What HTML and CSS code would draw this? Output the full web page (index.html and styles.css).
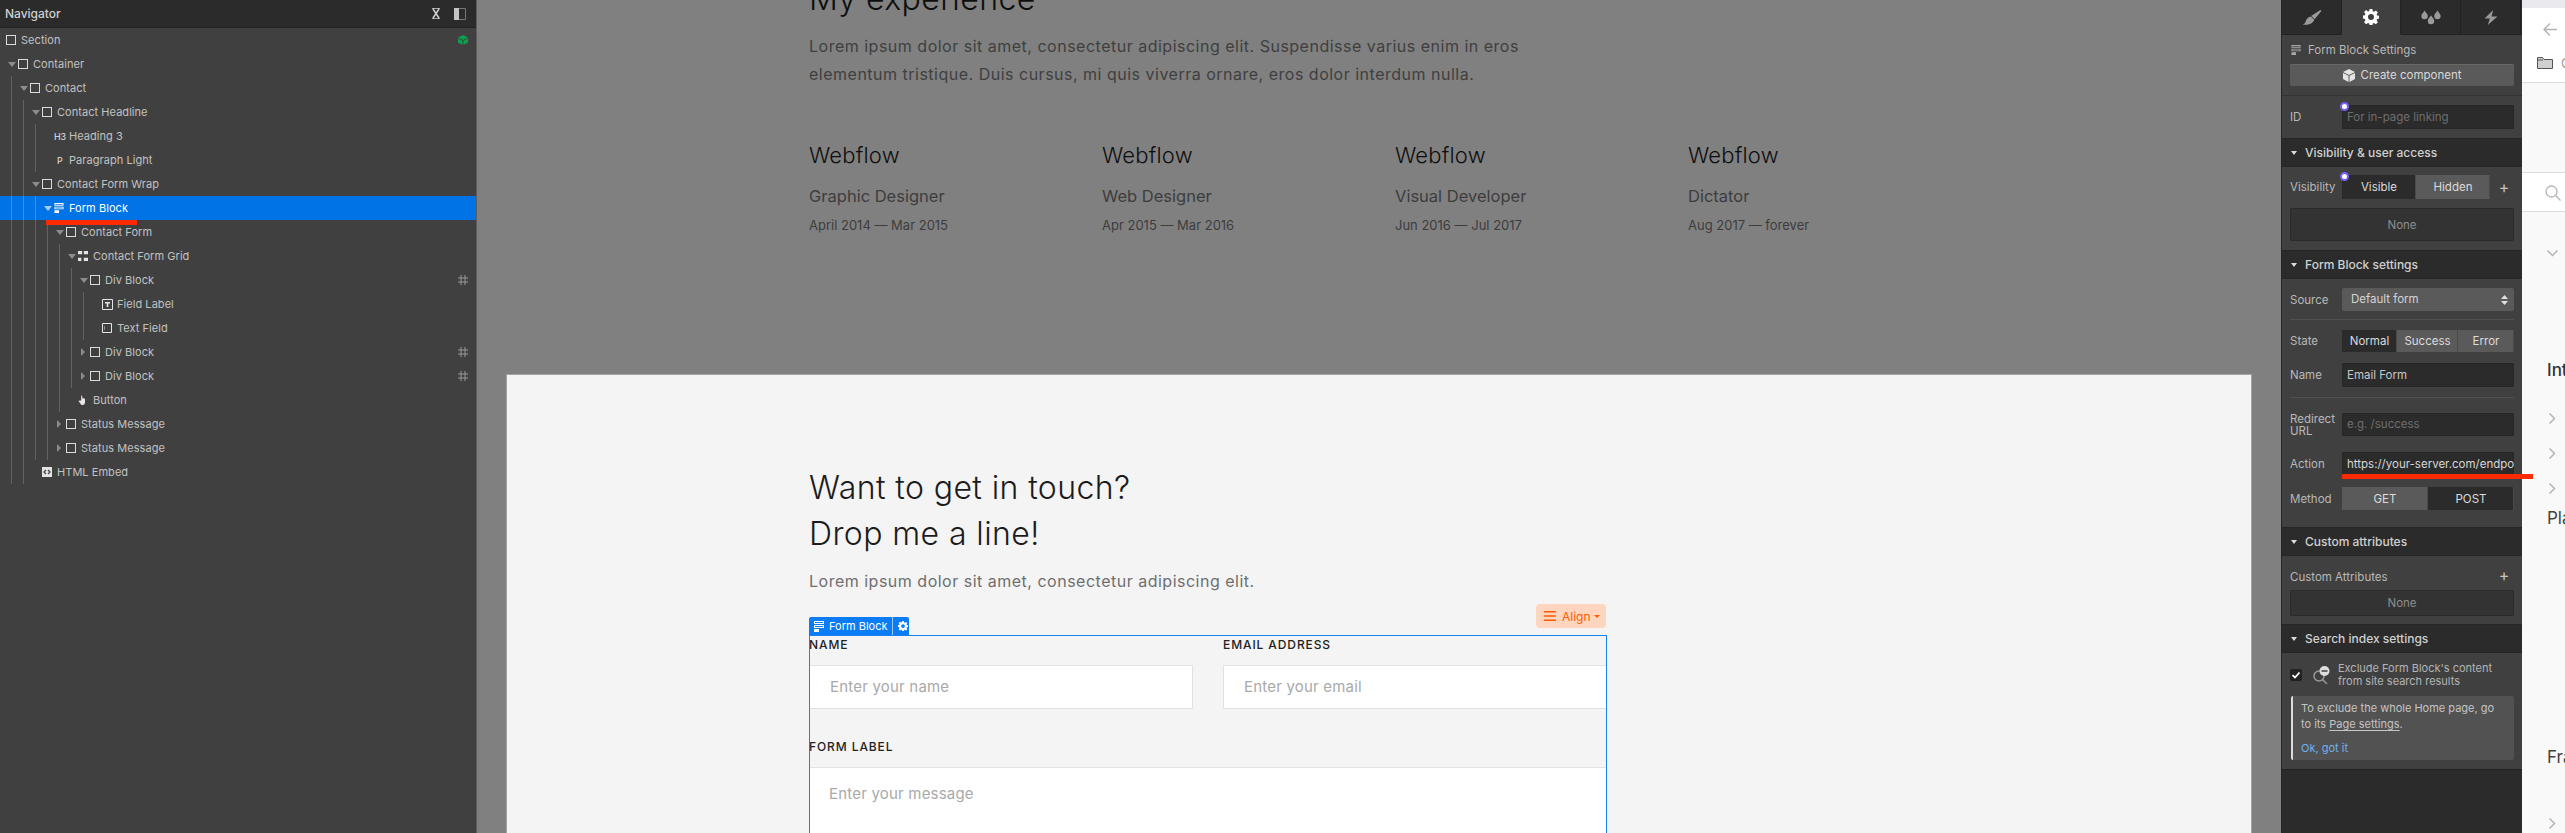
FILE: index.html
```html
<!DOCTYPE html>
<html lang="en">
<head>
    <meta charset="UTF-8">
    <meta name="viewport" content="width=device-width, initial-scale=1.0">
    <title>Form Block</title>
    <link rel="stylesheet" href="styles.css">
</head>
<body>

    <svg class="d-none">
        <symbol id="formIcon" viewBox="0 0 10 11"><path d="M0 0h10v3H0z M1 1v1h8V1z M0 4h10v3H0z M1 5v1h8V5z M0 8h5v3H0z" fill="currentColor" fill-rule="evenodd"/></symbol>
        <symbol id="gridIcon" viewBox="0 0 10 10"><path d="M3 0v10M7 0v10M0 3h10M0 7h10" fill="none" stroke="currentColor"/></symbol>
        <symbol id="gearIcon" viewBox="0 0 16 16"><path d="M6.6 0h2.8l.4 2.2 1.2.5 1.9-1.3 2 2-1.3 1.9.5 1.2 2.2.4v2.8l-2.2.4-.5 1.2 1.3 1.9-2 2-1.9-1.3-1.2.5-.4 2.2H6.6l-.4-2.2-1.2-.5-1.9 1.3-2-2 1.3-1.9-.5-1.2L-.3 9.4V6.6l2.2-.4.5-1.2L1.1 3.1l2-2 1.9 1.3 1.2-.5zM8 5a3 3 0 1 0 0 6 3 3 0 0 0 0-6z" fill="currentColor" fill-rule="evenodd"/></symbol>
        <symbol id="cubeIcon" viewBox="0 0 12 13"><path d="M6 0l6 3-6 3-6-3zM0 4l5.5 2.8V13L0 10zM12 4L6.500 6.800V13L12 10z" fill="currentColor"/></symbol>
    </svg>

    <div class="app">

        <!-- navigator -->
        <aside class="nav_panel">
            <div class="nav_head">
                <span class="nav_title">Navigator</span>
                <svg class="nav_pin" viewBox="0 0 10 11"><path d="M1 0h8M1 11h8M2 1l6 9M8 1l-6 9" fill="none" stroke="#d0d0d0" stroke-width="1.500"/></svg>
                <svg class="nav_dock" viewBox="0 0 12 12"><path d="M0 0h5v12H0z" fill="#c4c4c4"/><path d="M5 .5h6.500v11H5" fill="none" stroke="#777"/></svg>
            </div>
            <div class="tree">
                <div class="row"><span class="slot slot_root"></span><i class="box"></i><span class="name">Section</span>
                    <svg class="row_end cube" viewBox="0 0 10 10"><path d="M5 0l5 2.500L5 5 0 2.500zM0 3.500l4.500 2.300V10L0 7.500zM10 3.500L5.500 5.800V10L10 7.500z" fill="#0aa04e"/></svg>
                </div>
                <div class="row"><span class="slot"><b class="caret"></b></span><i class="box"></i><span class="name">Container</span></div>
                <div class="row"><i class="g"></i><span class="slot"><b class="caret"></b></span><i class="box"></i><span class="name">Contact</span></div>
                <div class="row"><i class="g"></i><i class="g"></i><span class="slot"><b class="caret"></b></span><i class="box"></i><span class="name">Contact Headline</span></div>
                <div class="row"><i class="g"></i><i class="g"></i><i class="g"></i><span class="slot"></span><span class="tag_icon">H3</span><span class="name">Heading 3</span></div>
                <div class="row"><i class="g"></i><i class="g"></i><i class="g"></i><span class="slot"></span><span class="tag_icon tag_p">P</span><span class="name">Paragraph Light</span></div>
                <div class="row"><i class="g"></i><i class="g"></i><span class="slot"><b class="caret"></b></span><i class="box"></i><span class="name">Contact Form Wrap</span></div>
                <div class="row row_sel"><i class="g"></i><i class="g"></i><i class="g"></i><span class="slot"><b class="caret"></b></span><svg class="ico"><use href="#formIcon"/></svg><span class="name">Form Block</span></div>
                <div class="row"><i class="g"></i><i class="g"></i><i class="g"></i><i class="g"></i><span class="slot"><b class="caret"></b></span><i class="box"></i><span class="name">Contact Form</span></div>
                <div class="row"><i class="g"></i><i class="g"></i><i class="g"></i><i class="g"></i><i class="g"></i><span class="slot"><b class="caret"></b></span>
                    <svg class="ico" viewBox="0 0 12 12"><path d="M0 0h5v4H0zM7 0h5v4H7zM0 8h4v4H0zM7 8h5v4H7z" fill="#e4e4e4"/></svg><span class="name">Contact Form Grid</span></div>
                <div class="row"><i class="g"></i><i class="g"></i><i class="g"></i><i class="g"></i><i class="g"></i><i class="g"></i><span class="slot"><b class="caret"></b></span><i class="box"></i><span class="name">Div Block</span>
                    <svg class="row_end hash"><use href="#gridIcon"/></svg></div>
                <div class="row"><i class="g"></i><i class="g"></i><i class="g"></i><i class="g"></i><i class="g"></i><i class="g"></i><i class="g"></i><span class="slot"></span>
                    <svg class="ico ico_wide" viewBox="0 0 11 11"><path d="M.5.500h10v10H.5z" fill="none" stroke="#e4e4e4"/><path d="M3 3h5v1.500H6.300V8H4.700V4.500H3z" fill="#e4e4e4"/></svg><span class="name">Field Label</span></div>
                <div class="row"><i class="g"></i><i class="g"></i><i class="g"></i><i class="g"></i><i class="g"></i><i class="g"></i><i class="g"></i><span class="slot"></span>
                    <svg class="ico ico_wide" viewBox="0 0 11 11"><path d="M.5.500h9v9h-9z" fill="none" stroke="#e4e4e4"/><path d="M2.500 3v4" stroke="#888"/></svg><span class="name">Text Field</span></div>
                <div class="row"><i class="g"></i><i class="g"></i><i class="g"></i><i class="g"></i><i class="g"></i><i class="g"></i><span class="slot"><b class="caret caret_r"></b></span><i class="box"></i><span class="name">Div Block</span>
                    <svg class="row_end hash"><use href="#gridIcon"/></svg></div>
                <div class="row"><i class="g"></i><i class="g"></i><i class="g"></i><i class="g"></i><i class="g"></i><i class="g"></i><span class="slot"><b class="caret caret_r"></b></span><i class="box"></i><span class="name">Div Block</span>
                    <svg class="row_end hash"><use href="#gridIcon"/></svg></div>
                <div class="row"><i class="g"></i><i class="g"></i><i class="g"></i><i class="g"></i><i class="g"></i><span class="slot"></span>
                    <svg class="ico hand" viewBox="0 0 10 11"><path d="M3 6V1.200c0-.8 1.200-.8 1.200 0V4c0-.6 1-.6 1 0 0-.6 1-.6 1 .1 0-.5 1-.5 1 .2v3.200C7.200 9.800 6.300 11 4.600 11 3 11 2.500 10 1.700 8.700L.3 7c-.4-.6.300-1.200.9-.7z" fill="#e8e8e8"/></svg><span class="name">Button</span></div>
                <div class="row"><i class="g"></i><i class="g"></i><i class="g"></i><i class="g"></i><span class="slot"><b class="caret caret_r"></b></span><i class="box"></i><span class="name">Status Message</span></div>
                <div class="row"><i class="g"></i><i class="g"></i><i class="g"></i><i class="g"></i><span class="slot"><b class="caret caret_r"></b></span><i class="box"></i><span class="name">Status Message</span></div>
                <div class="row"><i class="g"></i><i class="g"></i><span class="slot"></span>
                    <svg class="ico" viewBox="0 0 10 10"><path d="M0 0h10v10H0z" fill="#e4e4e4"/><path d="M4 3L2 5l2 2M6 3l2 2-2 2" fill="none" stroke="#404040" stroke-width="1.200"/></svg><span class="name">HTML Embed</span></div>
            </div>
            <div class="mark mark_nav"></div>
        </aside>

        <!-- canvas -->
        <main class="canvas">
            <div class="page">
                <section class="dim_part">
                    <h3 class="big_head">My experience</h3>
                    <p class="lead lead_wide">Lorem ipsum dolor sit amet, consectetur adipiscing elit. Suspendisse varius enim in eros elementum tristique. Duis cursus, mi quis viverra ornare, eros dolor interdum nulla.</p>
                    <div class="jobs">
                        <div><h4 class="job_co">Webflow</h4><p class="job_role">Graphic Designer</p><p class="job_date">April 2014 — Mar 2015</p></div>
                        <div><h4 class="job_co">Webflow</h4><p class="job_role">Web Designer</p><p class="job_date">Apr 2015 — Mar 2016</p></div>
                        <div><h4 class="job_co">Webflow</h4><p class="job_role">Visual Developer</p><p class="job_date">Jun 2016 — Jul 2017</p></div>
                        <div><h4 class="job_co">Webflow</h4><p class="job_role">Dictator</p><p class="job_date">Aug 2017 — forever</p></div>
                    </div>
                </section>
                <section class="contact_part">
                    <h3 class="big_head big_dark">Want to get in touch?<br>Drop me a line!</h3>
                    <p class="lead lead_light">Lorem ipsum dolor sit amet, consectetur adipiscing elit.</p>
                    <div class="form_block">
                        <div class="form_tag">
                            <svg class="form_tag_ico"><use href="#formIcon"/></svg>
                            <span class="form_tag_txt">Form Block</span>
                            <svg class="form_tag_gear"><use href="#gearIcon"/></svg>
                        </div>
                        <div class="align_btn">
                            <svg class="align_ico" viewBox="0 0 12 10"><path d="M0 0h12v1.500H0zM0 4.200h12v1.500H0zM0 8.500h12V10H0z" fill="#ff5a00"/></svg>
                            Align<b class="align_caret"></b>
                        </div>
                        <div class="form_grid">
                            <div>
                                <label class="form_label">Name</label>
                                <div class="form_input">Enter your name</div>
                            </div>
                            <div>
                                <label class="form_label">Email address</label>
                                <div class="form_input">Enter your email</div>
                            </div>
                        </div>
                        <label class="form_label form_label_msg">Form label</label>
                        <div class="form_input form_area">Enter your message</div>
                    </div>
                </section>
            </div>
        </main>

        <!-- settings -->
        <aside class="set_panel">
            <div class="tabs">
                <div class="tab"><svg class="tab_ico" viewBox="0 0 20 16"><path d="M19 0l1 1-7 8.500-4-3zM8.500 7l4 3C11.500 14 6 16.500 0 15.500c2-.5 3-2 3.500-4C4.300 9 6.500 7.500 8.500 7z" fill="#9a9a9a"/></svg></div>
                <div class="tab tab_on"><svg class="tab_ico tab_gear"><use href="#gearIcon"/></svg></div>
                <div class="tab"><svg class="tab_ico" viewBox="0 0 18 14"><path d="M3 .5c1.500 2.200 3 3.700 3 5.200a3 3 0 0 1-6 0C0 4.200 1.500 2.700 3 .5zM15 .5c1.500 2.200 3 3.700 3 5.200a3 3 0 0 1-6 0c0-1.500 1.500-3 3-5.200zM9 5c1.500 2.200 3 3.700 3 5.200a3 3 0 0 1-6 0C6 8.700 7.500 7.200 9 5z" fill="#9a9a9a"/></svg></div>
                <div class="tab"><svg class="tab_ico" viewBox="0 0 12 14"><path d="M8 0L0 8h5l-2 6 9-8H6.500z" fill="#9a9a9a"/></svg></div>
            </div>

            <div class="sec">
                <div class="el_head"><svg class="el_ico"><use href="#formIcon"/></svg>Form Block Settings</div>
                <div class="comp_btn"><svg class="comp_ico"><use href="#cubeIcon"/></svg>Create component</div>
            </div>
            <div class="sec sec_id">
                <div class="field"><span class="lbl">ID</span><div class="ctl ctl_in ctl_24 ph">For in-page linking<i class="dot"></i></div></div>
            </div>

            <div class="sec_head"><b class="sec_caret"></b>Visibility &amp; user access</div>
            <div class="sec sec_vis">
                <div class="field">
                    <span class="lbl">Visibility</span>
                    <div class="seg seg_vis"><span class="seg_b seg_dark">Visible</span><span class="seg_b">Hidden</span><i class="dot"></i></div>
                    <span class="plus">+</span>
                </div>
                <div class="none_box none_vis">None</div>
            </div>

            <div class="sec_head"><b class="sec_caret"></b>Form Block settings</div>
            <div class="sec sec_form">
                <div class="field">
                    <span class="lbl">Source</span>
                    <div class="ctl ctl_sel">Default form
                        <svg class="sel_arrows" viewBox="0 0 7 10"><path d="M3.500 0L7 4H0zM3.500 10L0 6h7z" fill="#e0e0e0"/></svg>
                    </div>
                </div>
                <div class="line line_a"></div>
                <div class="field f_state">
                    <span class="lbl">State</span>
                    <div class="seg seg_state"><span class="seg_b seg_dark st_a">Normal</span><span class="seg_b st_b">Success</span><span class="seg_b st_c">Error</span></div>
                </div>
                <div class="field f_name"><span class="lbl">Name</span><div class="ctl ctl_in ctl_24">Email Form</div></div>
                <div class="line line_b"></div>
                <div class="field f_redir"><span class="lbl lbl_two">Redirect URL</span><div class="ctl ctl_in ph">e.g. /success</div></div>
                <div class="field f_action"><span class="lbl">Action</span><div class="ctl ctl_in ctl_24 ctl_clip">https://your-server.com/endpoint</div></div>
                <div class="field f_method">
                    <span class="lbl">Method</span>
                    <div class="seg seg_method"><span class="seg_b">GET</span><span class="seg_b seg_dark">POST</span></div>
                </div>
            </div>

            <div class="sec_head"><b class="sec_caret"></b>Custom attributes</div>
            <div class="sec sec_attr">
                <div class="attr_top"><span class="lbl lbl_auto">Custom Attributes</span><span class="plus">+</span></div>
                <div class="none_box none_attr">None</div>
            </div>

            <div class="sec_head"><b class="sec_caret"></b>Search index settings</div>
            <div class="sec sec_search">
                <div class="excl">
                    <span class="chk"><svg viewBox="0 0 12 12"><path d="M2.500 6.200l2.500 2.300 4.500-5" fill="none" stroke="#fff" stroke-width="1.800"/></svg></span>
                    <svg class="excl_ico" viewBox="0 0 18 18"><circle cx="7" cy="10" r="5" fill="none" stroke="#999" stroke-width="1.500"/><path d="M10.500 13.500L15 18" stroke="#999" stroke-width="1.500"/><circle cx="12.500" cy="5" r="5" fill="#ddd"/><path d="M9.500 5h6" stroke="#404040" stroke-width="1.500"/></svg>
                    <span class="excl_txt">Exclude Form Block's content<br>from site search results</span>
                </div>
                <div class="notice">
                    <p class="notice_txt">To exclude the whole Home page, go<br>to its <u class="notice_link">Page settings</u>.</p>
                    <span class="notice_ok">Ok, got it</span>
                </div>
            </div>
            <div class="mark mark_action"></div>
        </aside>

        <!-- cut off panel on the right -->
        <aside class="far_panel">
            <div class="far_strip"></div>
            <div class="far_top">
                <svg class="far_back" viewBox="0 0 14 13"><path d="M7 .5L1 6.500l6 6M1 6.500h13" fill="none" stroke="#b4b4b4" stroke-width="1.500"/></svg>
                <div class="far_folder">
                    <svg class="far_folder_ico" viewBox="0 0 16 12"><path d="M.5 11.500V.5h5l1.500 2h8.500v9z" fill="#cfcfcf" stroke="#555"/><path d="M1 3h5" stroke="#555"/></svg>
                    <span class="far_c">C</span>
                </div>
            </div>
            <div class="far_gap"></div>
            <div class="far_search"><svg class="far_lens" viewBox="0 0 16 16"><circle cx="6.500" cy="6.500" r="5.500" fill="none" stroke="#b4b4b4" stroke-width="1.300"/><path d="M10.500 10.500L15.500 15.500" stroke="#b4b4b4" stroke-width="1.300"/></svg></div>
            <div class="far_list">
                <svg class="chev chev_down" viewBox="0 0 11 7"><path d="M.5.500l5 5 5-5" fill="none" stroke="#b4b4b4" stroke-width="1.500"/></svg>
                <div class="far_txt far_int">Int</div>
                <svg class="chev chev_r c_1" viewBox="0 0 7 11"><path d="M.5.500l5 5-5 5" fill="none" stroke="#b4b4b4" stroke-width="1.500"/></svg>
                <svg class="chev chev_r c_2" viewBox="0 0 7 11"><path d="M.5.500l5 5-5 5" fill="none" stroke="#b4b4b4" stroke-width="1.500"/></svg>
                <svg class="chev chev_r c_2" viewBox="0 0 7 11"><path d="M.5.500l5 5-5 5" fill="none" stroke="#b4b4b4" stroke-width="1.500"/></svg>
                <div class="far_txt far_pla">Pla</div>
                <div class="far_txt far_fra">Fra</div>
                <svg class="chev chev_r c_3" viewBox="0 0 7 11"><path d="M.5.500l5 5-5 5" fill="none" stroke="#b4b4b4" stroke-width="1.500"/></svg>
            </div>
        </aside>
    </div>

</body>
</html>
```

FILE: styles.css
```css
p, h3, h4{
    margin: 0;
    padding: 0;
}
.d-none{
    display: none;
}
body{
    margin: 0;
    padding: 0;
    width: 2565px;
    height: 833px;
    overflow: hidden;
    font-family: "Inter", "Liberation Sans", sans-serif;
}
.app{
    display: flex;
    height: 833px;
}

/* navigator */
.nav_panel{
    position: relative;
    width: 476px;
    flex-shrink: 0;
    background-color: #404040;
    box-shadow: 1px 0 0 #5c5c5c;
    z-index: 1;
}
.nav_head{
    height: 28px;
    box-sizing: border-box;
    border-bottom: 1px solid #222;
    background-color: #2b2b2b;
    display: flex;
    align-items: center;
    padding: 0 10px 0 5px;
}
.nav_title{
    font-size: 12px;
    font-weight: 500;
    color: #d0d0d0;
    flex: 1;
}
.nav_pin{
    width: 10px;
    height: 11px;
    margin-right: 13px;
}
.nav_dock{
    width: 12px;
    height: 12px;
}
.row{
    height: 24px;
    display: flex;
    align-items: center;
    color: #c2c2c2;
    font-size: 11px;
    letter-spacing: 0.05px;
}
.row_sel{
    background-color: #0073e6;
    color: #fff;
}
.g{
    width: 12px;
    height: 24px;
    box-sizing: border-box;
    border-right: 1px solid #626262;
    flex-shrink: 0;
}
.row_sel .g{
    border-right-color: #3a90e8;
}
.slot{
    width: 18px;
    flex-shrink: 0;
    display: flex;
    align-items: center;
}
.slot_root{
    width: 6px;
}
.caret{
    width: 0;
    height: 0;
    margin-left: 8px;
    border-left: 4px solid transparent;
    border-right: 4px solid transparent;
    border-top: 5px solid #8c8c8c;
}
.caret_r{
    margin-left: 9px;
    border-top: 4px solid transparent;
    border-bottom: 4px solid transparent;
    border-left: 4px solid #8c8c8c;
    border-right: 0;
}
.row_sel .caret{
    border-top-color: #a8cdf5;
}
.box{
    width: 10px;
    height: 10px;
    border: 1px solid #dcdcdc;
    box-sizing: border-box;
    flex-shrink: 0;
}
.ico{
    width: 10px;
    height: 10px;
    flex-shrink: 0;
    color: #fff;
}
.ico_wide{
    width: 11px;
    height: 11px;
    margin-right: -1px;
}
.tag_icon{
    width: 10px;
    font-size: 9px;
    color: #e4e4e4;
    letter-spacing: -0.3px;
    flex-shrink: 0;
}
.tag_p{
    padding-left: 3px;
    width: 7px;
}
.name{
    margin-left: 5px;
    white-space: nowrap;
}
.row_end{
    margin-left: auto;
    margin-right: 8px;
}
.cube{
    width: 10px;
    height: 10px;
}
.hash{
    width: 10px;
    height: 10px;
    color: #9a9a9a;
}
.mark{
    position: absolute;
    background-color: #ff2a00;
}
.mark_nav{
    left: 46px;
    top: 220px;
    width: 91px;
    height: 5px;
}
.mark_action{
    left: 60px;
    top: 474px;
    width: 191px;
    height: 5px;
}

/* canvas */
.canvas{
    width: 1805px;
    flex-shrink: 0;
    box-sizing: border-box;
    background-color: #808080;
    padding: 0 30px 0 31px;
    overflow: hidden;
}
.page{
    height: 833px;
}
.dim_part{
    box-sizing: border-box;
    padding-left: 302px;
    margin-top: -24px;
    height: 399px;
}
.big_head{
    font-size: 32px;
    line-height: 46px;
    font-weight: 300;
    letter-spacing: 0.4px;
    color: #0e0e0e;
}
.big_dark{
    color: #1c1c1c;
}
.lead{
    margin-top: 10px;
    font-size: 16px;
    line-height: 28px;
    color: #3f3f3f;
    letter-spacing: 0.5px;
}
.lead_wide{
    width: 720px;
}
.lead_light{
    color: #6f6f6f;
}
.jobs{
    display: grid;
    grid-template-columns: repeat(4, 293px);
    margin-top: 51px;
}
.job_co{
    font-size: 22px;
    line-height: 32px;
    font-weight: 300;
    letter-spacing: 0.2px;
    color: #0e0e0e;
}
.job_role{
    margin-top: 12px;
    font-size: 16.5px;
    line-height: 26px;
    color: #3d3d3d;
}
.job_date{
    margin-top: 6px;
    font-size: 13px;
    line-height: 20px;
    color: #3d3d3d;
}
.contact_part{
    background-color: #f4f4f4;
    box-shadow: 0 0 0 1px #a4a4a4;
    height: 458px;
    box-sizing: border-box;
    padding: 90px 0 0 302px;
    overflow: hidden;
}
.form_block{
    position: relative;
    width: 798px;
    margin-top: 40px;
    height: 300px;
    color: #222;
}
.form_block::after{
    content: "";
    position: absolute;
    left: 0;
    right: 0;
    top: 0;
    bottom: 0;
    border: 1px solid #1a82f0;
}
.form_tag{
    position: absolute;
    left: 0;
    top: -18px;
    height: 18px;
    width: 100px;
    background-color: #0a7cf5;
    color: #fff;
    display: flex;
    align-items: center;
    box-sizing: border-box;
    padding-left: 5px;
    border-radius: 2px 2px 0 0;
    font-size: 11px;
}
.form_tag_ico{
    width: 10px;
    height: 11px;
    margin-right: 5px;
}
.form_tag_txt{
    padding-right: 5px;
    border-right: 1px solid #9cc8f8;
    line-height: 18px;
    white-space: nowrap;
}
.form_tag_gear{
    width: 10px;
    height: 10px;
    margin-left: 5px;
}
.align_btn{
    position: absolute;
    right: 1px;
    top: -31px;
    width: 70px;
    height: 24px;
    box-sizing: border-box;
    padding-left: 8px;
    background-color: #fed6bf;
    border-radius: 4px;
    color: #ff5a00;
    font-size: 12px;
    display: flex;
    align-items: center;
}
.align_ico{
    width: 12px;
    height: 10px;
    margin-right: 6px;
}
.align_caret{
    margin-left: 3px;
    border-left: 3px solid transparent;
    border-right: 3px solid transparent;
    border-top: 3px solid #ff5a00;
}
.form_grid{
    display: grid;
    grid-template-columns: 384px 384px;
    column-gap: 30px;
}
.form_label{
    display: block;
    height: 30px;
    font-size: 12px;
    line-height: 20px;
    font-weight: 500;
    text-transform: uppercase;
    letter-spacing: 0.9px;
    color: #222;
}
.form_label_msg{
    margin-top: 28px;
}
.form_input{
    height: 44px;
    box-sizing: border-box;
    background-color: #fff;
    border: 1px solid #e2e2e2;
    padding: 0 20px;
    font-size: 15px;
    line-height: 42px;
    color: #a9a9a9;
    letter-spacing: 0.2px;
}
.form_grid > div:last-child .form_input{
    border-right: 0;
}
.form_area{
    height: 120px;
    border-width: 1px 0 0 0;
    line-height: 52px;
}

/* settings */
.set_panel{
    position: relative;
    width: 241px;
    flex-shrink: 0;
    box-sizing: border-box;
    background-color: #2b2b2b;
    border-left: 1px solid #262626;
    font-size: 11.5px;
    color: #c4c4c4;
}
.tabs{
    display: grid;
    grid-template-columns: 60px 59px 60px 60px;
    height: 35px;
    box-sizing: border-box;
    border-bottom: 1px solid #222;
}
.tab{
    display: flex;
    align-items: center;
    justify-content: center;
    height: 35px;
    box-sizing: border-box;
    border-right: 1px solid #222;
}
.tab_on{
    background-color: #404040;
    border-bottom: 1px solid #404040;
}
.tab_ico{
    width: 20px;
    height: 15px;
}
.tab_gear{
    width: 16px;
    height: 16px;
    color: #fff;
}
.sec{
    background-color: #404040;
    padding: 0 8px;
    border-bottom: 1px solid #333;
}
.el_head{
    height: 29px;
    display: flex;
    align-items: center;
    color: #b8b8b8;
}
.el_ico{
    width: 10px;
    height: 10px;
    margin: 0 7px 0 1px;
    color: #a8a8a8;
}
.comp_btn{
    height: 22px;
    margin-bottom: 9px;
    background-color: #5a5a5a;
    border-radius: 2px;
    box-shadow: inset 0 1px 0 #686868;
    display: flex;
    align-items: center;
    justify-content: center;
    color: #d8d8d8;
}
.comp_ico{
    width: 12px;
    height: 13px;
    margin-right: 6px;
    color: #e4e4e4;
}
.sec_id{
    padding-top: 9px;
    padding-bottom: 9px;
    border-bottom: 0;
}
.sec_head{
    height: 29px;
    box-sizing: border-box;
    background-color: #2b2b2b;
    border-top: 1px solid #262626;
    border-bottom: 1px solid #262626;
    display: flex;
    align-items: center;
    padding-left: 9px;
    font-size: 12px;
    font-weight: 500;
    color: #d0d0d0;
}
.sec_caret{
    width: 0;
    height: 0;
    margin-right: 8px;
    border-left: 3.5px solid transparent;
    border-right: 3.5px solid transparent;
    border-top: 4px solid #ddd;
}
.field{
    display: flex;
    align-items: center;
}
.lbl{
    width: 52px;
    flex-shrink: 0;
    color: #b8b8b8;
}
.lbl_two{
    line-height: 12px;
    width: 40px;
    margin-right: 12px;
}
.lbl_auto{
    width: auto;
}
.ctl{
    flex: 1;
    min-width: 0;
    height: 23px;
    line-height: 23px;
    box-sizing: border-box;
    padding: 0 5px;
    border-radius: 2px;
}
.ctl_in{
    position: relative;
    background-color: #2b2b2b;
    box-shadow: inset 0 0 0 1px #262626;
    color: #c8c8c8;
}
.ctl_24{
    height: 24px;
    line-height: 24px;
}
.ph{
    color: #6e6e6e;
}
.ctl_clip{
    overflow: hidden;
    white-space: nowrap;
    color: #d8d8d8;
}
.ctl_sel{
    position: relative;
    padding-left: 9px;
    background-color: #5a5a5a;
    color: #d4d4d4;
    display: flex;
    align-items: center;
    justify-content: space-between;
}
.sel_arrows{
    width: 7px;
    height: 10px;
    margin-right: 1px;
}
.dot{
    position: absolute;
    left: -2px;
    top: -3px;
    width: 5px;
    height: 5px;
    border: 2px solid #7a5cff;
    border-radius: 50%;
    background-color: #fff;
}
.seg{
    position: relative;
    display: flex;
    height: 100%;
    border-radius: 2px;
}
.seg_b{
    display: flex;
    align-items: center;
    justify-content: center;
    background-color: #5a5a5a;
    color: #dcdcdc;
    box-shadow: inset -1px 0 0 #4a4a4a;
}
.seg_dark{
    background-color: #2b2b2b;
}
.seg_vis{
    height: 24px;
}
.seg_vis .seg_b{
    width: 74px;
}
.seg_vis + .plus{
    margin-left: 7px;
}
.plus{
    font-size: 16px;
    line-height: 16px;
    color: #c4c4c4;
    width: 14px;
    text-align: center;
}
.sec_vis{
    padding-top: 8px;
    padding-bottom: 9px;
    border-bottom: 0;
}
.none_box{
    background-color: #333;
    box-shadow: inset 0 0 0 1px #2b2b2b;
    border-radius: 2px;
    color: #8e8e8e;
    display: flex;
    align-items: center;
    justify-content: center;
}
.none_vis{
    height: 33px;
    margin-top: 9px;
}
.none_attr{
    height: 26px;
}
.sec_form{
    padding-top: 9px;
    padding-bottom: 17px;
    border-bottom: 0;
}
.line{
    height: 1px;
    background-color: #505050;
}
.line_a{
    margin-top: 8px;
}
.line_b{
    margin-top: 10px;
}
.f_state{
    margin-top: 10px;
    height: 22px;
}
.st_a{
    width: 55px;
}
.st_b{
    width: 61px;
}
.st_c{
    width: 56px;
}
.f_name{
    margin-top: 11px;
}
.f_redir{
    margin-top: 15px;
    height: 23px;
}
.f_action{
    margin-top: 16px;
}
.f_method{
    margin-top: 11px;
    height: 23px;
}
.seg_method .seg_b{
    width: 86px;
}
.sec_attr{
    padding-top: 11px;
    padding-bottom: 8px;
    border-bottom: 0;
}
.attr_top{
    height: 23px;
    display: flex;
    align-items: flex-start;
    justify-content: space-between;
    line-height: 20px;
}
.attr_top .plus{
    margin-right: 3px;
}
.sec_search{
    padding-top: 9px;
    padding-bottom: 9px;
    border-bottom: 1px solid #222;
}
.excl{
    display: flex;
    align-items: center;
}
.chk{
    width: 12px;
    height: 12px;
    background-color: #222;
    border-radius: 2px;
    flex-shrink: 0;
}
.chk svg{
    display: block;
}
.excl_ico{
    width: 18px;
    height: 18px;
    margin: 0 8px 0 10px;
    flex-shrink: 0;
}
.excl_txt{
    font-size: 11px;
    line-height: 13px;
    color: #b4b4b4;
    white-space: nowrap;
}
.notice{
    margin-top: 8px;
    margin-left: 1px;
    height: 64px;
    box-sizing: border-box;
    background-color: #525252;
    border-left: 2px solid #ddd;
    border-radius: 2px;
    padding: 4px 0 0 8px;
    font-size: 11px;
}
.notice_txt{
    line-height: 16px;
    color: #c4c4c4;
    white-space: nowrap;
}
.notice_link{
    text-underline-offset: 2px;
}
.notice_ok{
    display: block;
    margin-top: 8px;
    line-height: 16px;
    color: #6fb1f0;
}

/* right panel, mostly off screen */
.far_panel{
    width: 43px;
    flex-shrink: 0;
    overflow: hidden;
    background-color: #f9f9f9;
    color: #444;
    font-size: 17px;
}
.far_strip{
    height: 8px;
    background-color: #e9e9ee;
}
.far_top{
    height: 75px;
    box-sizing: border-box;
    background-color: #fff;
    border-bottom: 1px solid #dcdcdc;
    padding: 15px 0 0 15px;
}
.far_back{
    display: block;
    margin-left: 6px;
    width: 14px;
    height: 13px;
}
.far_folder{
    display: flex;
    align-items: center;
    margin-top: 19px;
    white-space: nowrap;
}
.far_folder_ico{
    width: 16px;
    height: 12px;
    flex-shrink: 0;
}
.far_c{
    margin-left: 8px;
    color: #999;
    font-size: 13px;
}
.far_gap{
    height: 89px;
}
.far_search{
    height: 40px;
    box-sizing: border-box;
    background-color: #fff;
    border-top: 1px solid #dcdcdc;
    border-bottom: 1px solid #dcdcdc;
    padding: 12px 0 0 23px;
}
.far_lens{
    display: block;
    width: 16px;
    height: 16px;
}
.far_list{
    padding-left: 25px;
}
.chev{
    display: block;
}
.chev_down{
    width: 11px;
    height: 7px;
    margin-top: 38px;
}
.chev_r{
    width: 7px;
    height: 11px;
    margin-left: 2px;
}
.c_1{
    margin-top: 32px;
}
.c_2{
    margin-top: 24px;
}
.c_3{
    margin-top: 50px;
}
.far_txt{
    line-height: 22px;
    white-space: nowrap;
}
.far_int{
    margin-top: 102px;
    font-weight: 500;
    color: #333;
}
.far_pla{
    margin-top: 13px;
}
.far_fra{
    margin-top: 217px;
}
```
